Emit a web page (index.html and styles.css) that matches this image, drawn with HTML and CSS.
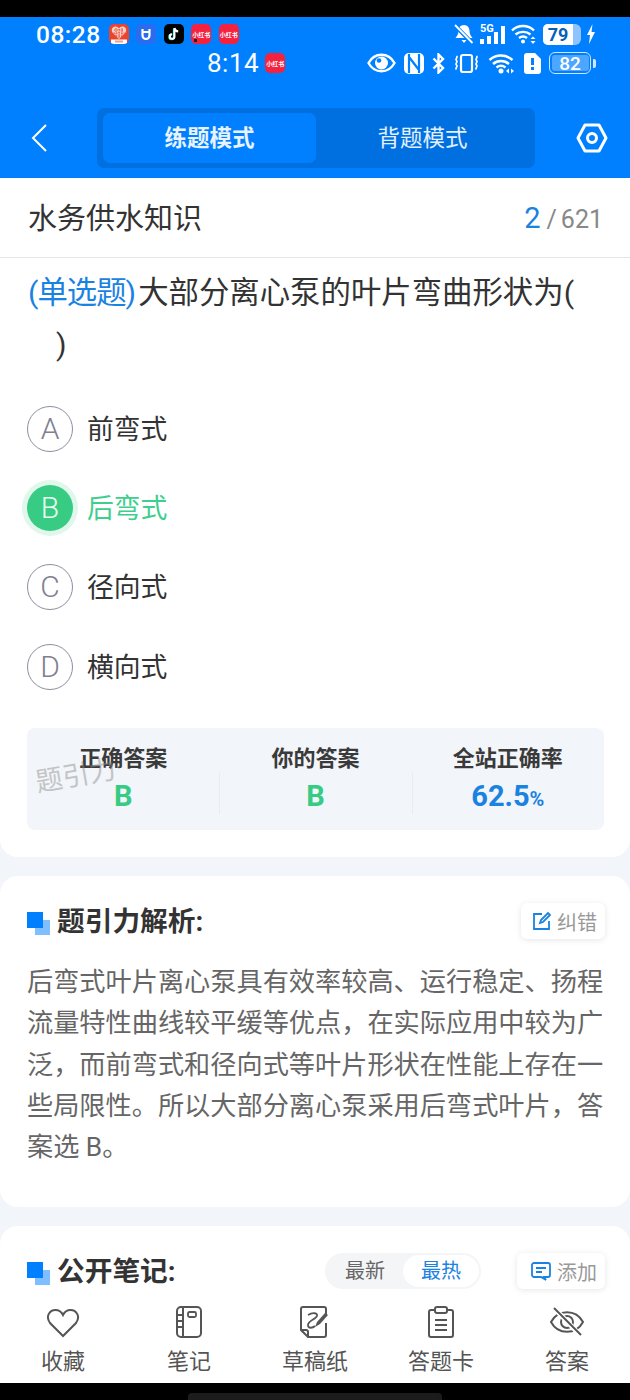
FILE: index.html
```html
<!DOCTYPE html>
<html lang="zh-CN">
<head>
    <meta charset="UTF-8">
    <meta name="viewport" content="width=device-width, initial-scale=1.0">
    <title>题引力</title>
    <link rel="stylesheet" href="styles.css">
</head>
<body>
    <div class="screen">
        <div class="top-black"></div>
        <header class="header">
            <div class="status-row status-one">
                <span class="time">08:28</span>
                <div class="app-icons">
                    <span class="app app-red"><svg width="20" height="20" viewBox="0 0 20 20"><path d="M10 15 3.500 8.500C1.500 5 4 2.500 6.500 2.500 8 2.500 9.300 3.300 10 4.500 10.700 3.300 12 2.500 13.500 2.500 16 2.500 18.500 5 16.500 8.500Z" fill="#f8d0c8"/><path d="M5 6h10M4.500 9h11M7 12h6M7 4v8M10 5v9M13 4v8" stroke="#e8442e" stroke-width="1" stroke-dasharray="1.500 1"/><rect x="2" y="15.500" width="16" height="4.500" fill="#fff"/><rect x="6" y="16.500" width="8" height="2" fill="#e8a090"/></svg></span>
                    <span class="app app-blue"><svg width="20" height="20" viewBox="0 0 20 20"><path d="M6.500 5v6.500a3.500 3.500 0 0 0 7 0V5M6.500 8h7" fill="none" stroke="#fff" stroke-width="2.200"/></svg></span>
                    <span class="app app-black"><svg width="20" height="20" viewBox="0 0 20 20"><path d="M10.500 4v8.500a2.300 2.300 0 1 1-2.300-2.300" fill="none" stroke="#25f4ee" stroke-width="2" transform="translate(-.6 .4)"/><path d="M10.500 4v8.500a2.300 2.300 0 1 1-2.300-2.300M10.500 4c.3 2 1.700 3.300 3.700 3.500" fill="none" stroke="#fff" stroke-width="2"/></svg></span>
                    <span class="app app-pink app-dot">小红书</span>
                    <span class="app app-pink">小红书</span>
                </div>
                <div class="status-right">
                    <svg width="20" height="20" viewBox="0 0 20 20"><path d="M10 1c-3.500 0-5.500 2.800-5.500 6 0 3-1.500 5-3 7h17c-1.500-2-3-4-3-7 0-3.200-2-6-5.500-6ZM7.500 16h5L10 19Z" fill="#fff"/><path d="M1.500 2 18 19" stroke="#0080ff" stroke-width="4"/><path d="M1 1 18.500 19" stroke="#fff" stroke-width="1.800"/></svg>
                    <svg width="25" height="22" viewBox="0 0 25 22"><text x="0" y="9" class="signal-text">5G</text><rect x="0" y="16" width="4" height="5" fill="#fff"/><rect x="7" y="13" width="4" height="8" fill="#fff"/><rect x="14" y="9" width="4" height="12" fill="#fff"/><rect x="21" y="3" width="4" height="18" fill="#fff"/></svg>
                    <svg width="26" height="20" viewBox="0 0 26 20"><path d="M1 6.500C7 .5 17 .5 23 6.500M4.500 10.500c4-3.500 11-3.500 15 0M8 14c2.500-2 5.500-2 8 0" fill="none" stroke="#fff" stroke-width="2.400"/><circle cx="12" cy="17.500" r="2" fill="#fff"/><path d="M22 12.500l2.500 2.500h-5ZM22 20l2.500-3h-5Z" fill="#fff"/></svg>
                    <span class="battery-full"><span class="battery-fill">79</span></span>
                    <svg width="8" height="20" viewBox="0 0 8 20"><path d="M5.500 0 0 11h3l-1 9 6-12H4.500Z" fill="#fff"/></svg>
                </div>
            </div>
            <div class="status-row status-two">
                <span class="time time-two">8:14</span>
                <span class="app app-pink">小红书</span>
                <div class="status-right status-right-two">
                    <svg width="29" height="20" viewBox="0 0 29 20"><path d="M1.500 10c6-11 20-11 26 0-6 11-20 11-26 0Z" fill="none" stroke="#fff" stroke-width="2.400"/><circle cx="14.500" cy="10" r="6.500" fill="#fff"/><circle cx="12" cy="7.500" r="2.300" fill="#0080ff"/></svg>
                    <svg width="20" height="21" viewBox="0 0 20 21"><rect width="20" height="21" rx="5" fill="#fff"/><path d="M5 1v19M15 1v19M5 4l10 13" fill="none" stroke="#0080ff" stroke-width="2.200"/></svg>
                    <svg width="13" height="21" viewBox="0 0 13 21"><path d="M1.500 5.500 11 15l-4.500 4.500V1.500L11 6 1.500 15.500" fill="none" stroke="#fff" stroke-width="2.400"/></svg>
                    <svg width="27" height="21" viewBox="0 0 27 21"><rect x="8" y="2" width="11" height="17" rx="2" fill="none" stroke="#fff" stroke-width="2.200"/><path d="M3.500 3c2 1.500-2 3 0 4.500s-2 3 0 4.500-2 3 0 4.500M23.500 3c2 1.500-2 3 0 4.500s-2 3 0 4.500-2 3 0 4.500" fill="none" stroke="#fff" stroke-width="1.800"/></svg>
                    <svg width="28" height="21" viewBox="0 0 28 21"><path d="M1.500 7c6.500-6 16.500-6 23 0M5 11c4.500-4 11.500-4 16 0M8.500 14.500c3-2.200 6-2.200 9 0" fill="none" stroke="#fff" stroke-width="2.400"/><circle cx="13" cy="18" r="2.500" fill="#fff"/><path d="M21 15.500v5l-3-2.500ZM23 15.500v5l3-2.500Z" fill="#fff"/></svg>
                    <svg width="17" height="21" viewBox="0 0 17 21"><path d="M3 0h8l6 6v12a3 3 0 0 1-3 3H3a3 3 0 0 1-3-3V3a3 3 0 0 1 3-3Z" fill="#fff"/><rect x="7" y="5" width="3" height="7" fill="#0080ff"/><rect x="7" y="14" width="3" height="3" fill="#0080ff"/></svg>
                    <span class="battery-line"><span class="battery-inner">82</span></span>
                    <span class="battery-cap"></span>
                </div>
            </div>
            <nav class="nav">
                <svg class="back" width="18" height="30" viewBox="0 0 18 30"><path d="M16 2 3 15l13 13" fill="none" stroke="#fff" stroke-width="2"/></svg>
                <div class="mode-switch">
                    <div class="mode mode-active">练题模式</div>
                    <div class="mode">背题模式</div>
                </div>
                <svg class="settings" width="32" height="30" viewBox="0 0 32 30"><path d="M9 2h14l7 13-7 13H9L2 15Z" fill="none" stroke="#fff" stroke-width="3" stroke-linejoin="round"/><circle cx="16" cy="15" r="4.500" fill="none" stroke="#fff" stroke-width="3"/></svg>
            </nav>
        </header>

        <main class="content">
            <section class="card card-question">
                <div class="title-row">
                    <span class="exam-title">水务供水知识</span>
                    <span class="progress"><b>2</b><i>/</i>621</span>
                </div>
                <div class="question"><span class="q-type">(单选题)</span>大部分离心泵的叶片弯曲形状为(<br><span class="q-indent">)</span></div>
                <div class="options">
                    <div class="option"><span class="option-mark">A</span><span class="option-text">前弯式</span></div>
                    <div class="option option-right"><span class="option-mark">B</span><span class="option-text">后弯式</span></div>
                    <div class="option"><span class="option-mark">C</span><span class="option-text">径向式</span></div>
                    <div class="option"><span class="option-mark">D</span><span class="option-text">横向式</span></div>
                </div>
                <div class="stats">
                    <div class="stat"><div class="stat-label">正确答案</div><div class="stat-value green">B</div></div>
                    <div class="stat"><div class="stat-label">你的答案</div><div class="stat-value green">B</div></div>
                    <div class="stat"><div class="stat-label">全站正确率</div><div class="stat-value blue">62.5<small>%</small></div></div>
                    <span class="watermark">题引力</span>
                </div>
            </section>

            <section class="card card-analysis">
                <div class="section-head">
                    <span class="squares"></span>
                    <h2>题引力解析:</h2>
                    <span class="pill-btn"><svg width="20" height="20" viewBox="0 0 20 20"><path d="M10 3H2v15h15v-8M8 12l1-3 7-7 2 2-7 7Z" fill="none" stroke="#1a82e0" stroke-width="1.800"/></svg>纠错</span>
                </div>
                <p class="analysis">后弯式叶片离心泵具有效率较高、运行稳定、扬程流量特性曲线较平缓等优点&#65292;在实际应用中较为广泛&#65292;而前弯式和径向式等叶片形状在性能上存在一些局限性。所以大部分离心泵采用后弯式叶片&#65292;答案选 B。</p>
            </section>

            <section class="card card-notes">
                <div class="section-head">
                    <span class="squares"></span>
                    <h2>公开笔记:</h2>
                    <div class="sort">
                        <span class="sort-item">最新</span>
                        <span class="sort-item sort-active">最热</span>
                    </div>
                    <span class="pill-btn"><svg width="22" height="20" viewBox="0 0 22 20"><path d="M4 2h14a2 2 0 0 1 2 2v10a2 2 0 0 1-2 2h-4l2 3-5-3H4a2 2 0 0 1-2-2V4a2 2 0 0 1 2-2ZM6 7h10M6 11h6" fill="none" stroke="#1a82e0" stroke-width="1.800"/></svg>添加</span>
                </div>
            </section>
        </main>

        <footer class="tabbar">
            <div class="tab"><svg width="34" height="32" viewBox="0 0 34 32"><path d="M17 30 4 17C-1 10 4 4 9.500 4 13 4 15.500 6 17 9 18.500 6 21 4 24.500 4 30 4 35 10 30 17Z" fill="none" stroke="#555" stroke-width="2"/></svg>收藏</div>
            <div class="tab"><svg width="28" height="32" viewBox="0 0 28 32"><rect x="2" y="1" width="24" height="30" rx="4" fill="none" stroke="#555" stroke-width="2"/><path d="M8 1v30M2 9h6M2 15h6M2 21h6" stroke="#555" stroke-width="2"/><rect x="13" y="6" width="8" height="5" rx="1.500" fill="none" stroke="#555" stroke-width="1.800"/></svg>笔记</div>
            <div class="tab"><svg width="30" height="32" viewBox="0 0 30 32"><path d="M26 9V3a2 2 0 0 0-2-2H3a2 2 0 0 0-2 2v21l7 7h16a2 2 0 0 0 2-2V17M1 24h5a2 2 0 0 1 2 2v5" fill="none" stroke="#555" stroke-width="2"/><path d="M8 9c5-3 10-2 9 1s-9 5-9 9 5 3 7 1" fill="none" stroke="#555" stroke-width="1.800"/><path d="M28 9 20 18l-5 3 2-5 8-9Z" fill="#555"/></svg>草稿纸</div>
            <div class="tab"><svg width="28" height="32" viewBox="0 0 28 32"><path d="M8 4H4a2 2 0 0 0-2 2v23a2 2 0 0 0 2 2h20a2 2 0 0 0 2-2V6a2 2 0 0 0-2-2h-4" fill="none" stroke="#555" stroke-width="2"/><rect x="8" y="1" width="12" height="6" rx="2" fill="none" stroke="#555" stroke-width="2"/><path d="M8 14h12M8 19h12M8 24h12" stroke="#555" stroke-width="2"/></svg>答题卡</div>
            <div class="tab"><svg width="36" height="32" viewBox="0 0 36 32"><path d="M2 16C9 3 27 3 34 16 27 29 9 29 2 16Z" fill="none" stroke="#555" stroke-width="2"/><circle cx="18" cy="16" r="6" fill="none" stroke="#555" stroke-width="2"/><path d="M5 2l26 27" stroke="#fff" stroke-width="5"/><path d="M5 2l27 27" stroke="#555" stroke-width="2"/></svg>答案</div>
        </footer>
        <div class="bottom-black"><span class="home-bar"></span></div>
    </div>
</body>
</html>
```

FILE: styles.css
```css
* {
    box-sizing: border-box;
}
body {
    font-family: Roboto, "Noto Sans CJK SC", sans-serif;
    margin: 0;
    background-color: #f2f5f9;
    color: #333;
}
.screen {
    width: 630px;
    height: 1400px;
    display: flex;
    flex-direction: column;
    overflow: hidden;
}
.top-black {
    height: 17px;
    background-color: #000;
    flex: none;
}
.header {
    height: 161px;
    flex: none;
    background-color: #0080ff;
    color: #fff;
}
.status-row {
    display: flex;
    align-items: center;
}
.status-one {
    height: 30px;
    margin-top: 2px;
    padding-left: 36px;
}
.status-two {
    height: 30px;
    margin-top: -1px;
    padding-left: 207px;
}
.time {
    font-size: 24.5px;
    font-weight: 500;
    letter-spacing: 0.5px;
}
.time-two {
    margin-right: 6px;
    font-size: 26px;
    font-weight: 400;
}
.app-icons {
    display: flex;
    gap: 7.5px;
    margin-left: 8px;
}
.app {
    position: relative;
    width: 20px;
    height: 20px;
    border-radius: 5px;
    display: flex;
    align-items: center;
    justify-content: center;
    overflow: hidden;
    flex: none;
}
.app-red {
    background-color: #e8442e;
}
.app-blue {
    background-color: #2a6cf0;
}
.app-black {
    background-color: #000;
}
.app-pink {
    background-color: #f5223f;
    font-size: 6px;
    font-weight: 700;
    white-space: nowrap;
}
.app-dot::after {
    content: "";
    position: absolute;
    left: 3px;
    bottom: 2px;
    width: 3px;
    height: 3px;
    background-color: #222;
}
.status-right {
    display: flex;
    align-items: center;
    gap: 6px;
    margin-left: auto;
    padding-right: 35px;
}
.status-right-two {
    gap: 8px;
    padding-right: 34px;
}
.signal-text {
    font-size: 11px;
    font-weight: 700;
    fill: #fff;
}
.battery-full {
    width: 38px;
    height: 21px;
    border-radius: 5px 6px 6px 5px;
    background-color: #8fc4ff;
    overflow: hidden;
    display: block;
}
.battery-fill {
    display: block;
    width: 30px;
    height: 21px;
    background-color: #fff;
    color: #0a5fb8;
    font-size: 18px;
    font-weight: 700;
    line-height: 21px;
    text-align: center;
}
.battery-line {
    width: 42px;
    height: 22px;
    padding: 1.5px;
    border: 1.5px solid #cfe6ff;
    border-radius: 6px;
}
.battery-inner {
    display: block;
    height: 16px;
    background-color: #4da6ff;
    border-radius: 3px;
    font-size: 19px;
    font-weight: 500;
    line-height: 17px;
    text-align: center;
}
.battery-cap {
    width: 3px;
    height: 9px;
    margin-left: -6px;
    background-color: #cfe6ff;
    border-radius: 0 2px 2px 0;
}
.nav {
    display: flex;
    align-items: center;
    height: 60px;
    margin-top: 30px;
    padding-left: 30px;
}
.back {
    flex: none;
}
.mode-switch {
    display: flex;
    width: 438px;
    height: 60px;
    margin-left: 49px;
    padding: 5px 6px;
    background-color: #0070e0;
    border-radius: 7px;
}
.mode {
    width: 213px;
    font-size: 22.5px;
    line-height: 51px;
    text-align: center;
    color: #e2f0ff;
}
.mode-active {
    background-color: #0080ff;
    border-radius: 7px;
    color: #e8f3ff;
    font-weight: 700;
}
.settings {
    margin-left: 41px;
    flex: none;
}
.content {
    flex: 1;
    min-height: 0;
    overflow: hidden;
}
.card {
    background-color: #fff;
    border-radius: 18px;
    margin-bottom: 19px;
}
.card-question {
    height: 679px;
    border-radius: 0 0 18px 18px;
}
.title-row {
    height: 80px;
    display: flex;
    align-items: center;
    justify-content: space-between;
    padding: 0 27px 0 28px;
    border-bottom: 1px solid #e4e6ea;
}
.exam-title {
    margin-bottom: 4px;
    font-size: 29px;
    color: #333;
}
.progress {
    font-size: 25px;
    color: #888;
}
.progress b {
    font-size: 29px;
    font-weight: 400;
    color: #1a82e0;
}
.progress i {
    font-style: normal;
    margin: 0 4px 0 6px;
}
.question {
    padding: 9px 28px 0;
    font-size: 30.4px;
    line-height: 52px;
    color: #333;
}
.q-type {
    margin-right: 3px;
    color: #1a82e0;
    letter-spacing: -1px;
}
.q-indent {
    padding-left: 28px;
}
.options {
    margin-top: 18px;
}
.option {
    height: 79.3px;
    display: flex;
    align-items: center;
    padding-left: 27px;
    font-size: 26.8px;
    color: #333;
}
.option-text {
    margin-bottom: 3px;
}
.option-mark {
    width: 46px;
    height: 46px;
    border: 1.5px solid #8e8e9e;
    border-radius: 50%;
    margin-right: 14px;
    font-size: 30px;
    font-weight: 300;
    line-height: 43px;
    text-align: center;
    color: #80808f;
}
.option-right {
    color: #3ecf8e;
}
.option-right .option-mark {
    background-color: #38cb84;
    border: none;
    color: #e8fff3;
    line-height: 46px;
    box-shadow: 0 0 0 5px #e0f7ec;
}
.stats {
    position: relative;
    display: flex;
    height: 102px;
    margin: 22px 26px 0 27px;
    padding-top: 17px;
    background-color: #f2f5f9;
    border-radius: 8px;
}
.stat {
    position: relative;
    flex: 1;
    text-align: center;
}
.stat + .stat::before {
    content: "";
    position: absolute;
    left: 0;
    top: 27px;
    width: 1px;
    height: 42px;
    background-color: #e8ebf0;
}
.stat-label {
    font-size: 22px;
    font-weight: 700;
    line-height: 27px;
    color: #3a3a3a;
}
.stat-value {
    margin-top: 5px;
    font-size: 29px;
    font-weight: 700;
    line-height: 38px;
}
.stat-value small {
    font-size: 20px;
}
.green {
    color: #38cb84;
}
.blue {
    color: #1a82e0;
}
.watermark {
    position: absolute;
    left: 8px;
    top: 26px;
    font-size: 27px;
    color: #8a8a8a;
    opacity: 0.45;
    transform: rotate(-10deg);
    white-space: nowrap;
}
.card-analysis {
    height: 331px;
    padding: 0 25px 0 27px;
}
.section-head {
    display: flex;
    align-items: center;
    height: 36px;
}
.card-analysis .section-head {
    height: 90px;
}
.squares {
    position: relative;
    width: 16px;
    height: 16px;
    margin: 0 14px 3px 0;
    flex: none;
}
.squares::before {
    content: "";
    position: absolute;
    left: 8px;
    top: 8px;
    width: 15px;
    height: 15px;
    background-color: #7fbfff;
}
.squares::after {
    content: "";
    position: absolute;
    left: 0;
    top: 0;
    width: 16px;
    height: 16px;
    background-color: #0080ff;
}
.section-head h2 {
    margin: 0 0 4px;
    font-size: 27.7px;
    font-weight: 700;
    color: #333;
}
.pill-btn {
    display: flex;
    align-items: center;
    gap: 5px;
    margin-left: auto;
    height: 36px;
    padding: 0 8px 0 11px;
    background-color: #fff;
    border-radius: 6px;
    box-shadow: 0 1px 6px rgba(0, 0, 0, 0.1);
    font-size: 20px;
    color: #999;
}
.analysis {
    margin: -4px 0 0;
    font-size: 26.2px;
    line-height: 41.3px;
    color: #666;
}
.card-notes {
    padding: 27px 25px 0 27px;
    height: 200px;
}
.sort {
    display: flex;
    align-items: center;
    height: 36px;
    margin-left: auto;
    padding: 2px;
    background-color: #f4f5f7;
    border-radius: 18px;
}
.sort-item {
    width: 76px;
    font-size: 20px;
    line-height: 32px;
    text-align: center;
    color: #666;
}
.sort-active {
    background-color: #fff;
    border-radius: 16px;
    color: #1a82e0;
}
.sort + .pill-btn {
    margin-left: 36px;
    padding-left: 13px;
}
.tabbar {
    flex: none;
    height: 88px;
    display: flex;
    padding-top: 11px;
    background-color: #fff;
    margin-top: -1px;
}
.tab {
    flex: 1;
    display: flex;
    flex-direction: column;
    align-items: center;
    gap: 5px;
    font-size: 22px;
    color: #555;
}
.tab svg {
    height: 32px;
}
.bottom-black {
    height: 17px;
    flex: none;
    background-color: #000;
    display: flex;
    justify-content: center;
    padding-top: 10px;
}
.home-bar {
    display: block;
    width: 254px;
    height: 7px;
    background-color: #1c1c1c;
    border-radius: 4px 4px 0 0;
}
```
